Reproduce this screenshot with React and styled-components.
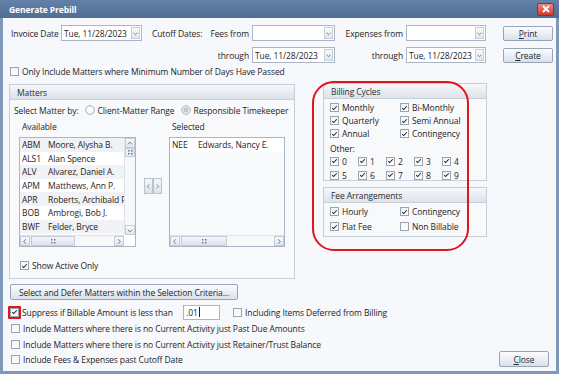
import styled, { createGlobalStyle } from "styled-components";

const GlobalStyle = createGlobalStyle`
  html, body { margin: 0; padding: 0; background: #fff; }
  body {
    font-family: "Open Sans", "Noto Sans", sans-serif;
    font-size: 8.5px;
    letter-spacing: -0.1px;
    color: #1f2328;
  }
  * { box-sizing: border-box; }
`;

const available = [
  ["ABM", "Moore, Alysha B."],
  ["ALS1", "Alan Spence"],
  ["ALV", "Alvarez, Daniel A."],
  ["APM", "Matthews, Ann P."],
  ["APR", "Roberts, Archibald P."],
  ["BOB", "Ambrogi, Bob J."],
  ["BWF", "Felder, Bryce"],
];

const cycles = [
  ["Monthly", "Bi-Monthly"],
  ["Quarterly", "Semi Annual"],
  ["Annual", "Contingency"],
];

function Chevron({ dir = "down" }) {
  const d = {
    down: "M2 3.5 L4.5 6 L7 3.5",
    up: "M2 5.5 L4.5 3 L7 5.5",
    left: "M5.5 2 L3 4.5 L5.5 7",
    right: "M3.5 2 L6 4.5 L3.5 7",
  }[dir];
  return (
    <svg width="9" height="9" viewBox="0 0 9 9">
      <path d={d} fill="none" stroke="#5d6672" strokeWidth="1" />
    </svg>
  );
}

function Grip() {
  return (
    <svg width="5" height="5" viewBox="0 0 5 5">
      {[0, 3].map((x) =>
        [0, 3].map((y) => <rect key={x + "-" + y} x={x} y={y} width="1.5" height="1.5" fill="#6f7884" />)
      )}
    </svg>
  );
}

function Check({ on = true }) {
  return (
    <CheckBox>
      {on && (
        <svg width="8" height="8" viewBox="0 0 8 8">
          <path d="M1.4 4.1 L3.1 5.8 L6.6 2" fill="none" stroke="#23272d" strokeWidth="1.2" />
        </svg>
      )}
    </CheckBox>
  );
}

function Radio({ on }) {
  return (
    <svg width="10" height="10" viewBox="0 0 10 10">
      <circle cx="5" cy="5" r="4.3" fill="#fbfcfd" stroke="#9aa4b1" strokeWidth="0.9" />
      {on && <circle cx="5" cy="5" r="2.4" fill="#c4cad3" stroke="#a6aeb9" strokeWidth="0.6" />}
    </svg>
  );
}

function Combo({ value }) {
  return (
    <ComboBox>
      <ComboText>{value}</ComboText>
      <DropBtn>
        <Chevron />
      </DropBtn>
    </ComboBox>
  );
}

function VScroll() {
  return (
    <VBar>
      <ScrollBtn>
        <Chevron dir="up" />
      </ScrollBtn>
      <VThumb>
        <Grip />
      </VThumb>
      <Track />
      <ScrollBtn>
        <Chevron dir="down" />
      </ScrollBtn>
    </VBar>
  );
}

function HScroll({ thumb }) {
  return (
    <HBar>
      <ScrollBtn>
        <Chevron dir="left" />
      </ScrollBtn>
      <HThumb $w={thumb}>
        <Grip />
      </HThumb>
      <Track />
      <ScrollBtn>
        <Chevron dir="right" />
      </ScrollBtn>
    </HBar>
  );
}

export default function App() {
  return (
    <>
      <GlobalStyle />
      <Window>
        <TitleBar>
          <span>Generate Prebill</span>
          <CloseX>
            <svg width="8" height="8" viewBox="0 0 8 8">
              <path d="M1 1 L7 7 M7 1 L1 7" stroke="#fff" strokeWidth="1.8" />
            </svg>
          </CloseX>
        </TitleBar>
        <Body>
          <TopGrid>
            <Label>Invoice Date</Label>
            <Combo value="Tue, 11/28/2023" />
            <Label $pad>Cutoff Dates:</Label>
            <RLabel>Fees from</RLabel>
            <Combo value="" />
            <RLabel>Expenses from</RLabel>
            <Combo value="" />
            <span />
            <Button>
              <u>P</u>rint
            </Button>

            <span />
            <span />
            <span />
            <RLabel>through</RLabel>
            <Combo value="Tue, 11/28/2023" />
            <RLabel>through</RLabel>
            <Combo value="Tue, 11/28/2023" />
            <span />
            <Button>
              <u>C</u>reate
            </Button>
          </TopGrid>

          <OptionRow $top={1}>
            <Check on={false} />
            Only Include Matters where Minimum Number of Days Have Passed
          </OptionRow>

          <Main>
            <Group $w={286} $h={195}>
              <GroupHead>Matters</GroupHead>
              <SelectRow>
                <span>Select Matter by:</span>
                <RadioItem>
                  <Radio />
                  Client-Matter Range
                </RadioItem>
                <RadioItem>
                  <Radio on />
                  Responsible Timekeeper
                </RadioItem>
              </SelectRow>
              <ListsRow>
                <ListColumn>
                  <ListLabel>Available</ListLabel>
                  <ListBox $w={117}>
                    <Rows>
                      {available.map(([code, name], i) => (
                        <Row key={code} $alt={i % 2 === 0}>
                          <Code>{code}</Code>
                          {name}
                        </Row>
                      ))}
                    </Rows>
                    <VScroll />
                    <HScroll thumb={44} />
                    <Corner />
                  </ListBox>
                </ListColumn>
                <MoveButtons>
                  <MoveBtn>
                    <Chevron dir="left" />
                  </MoveBtn>
                  <MoveBtn>
                    <Chevron dir="right" />
                  </MoveBtn>
                </MoveButtons>
                <ListColumn>
                  <ListLabel>Selected</ListLabel>
                  <ListBox $w={116} $single>
                    <Rows>
                      <Row>
                        <Code>NEE</Code>
                        Edwards, Nancy E.
                      </Row>
                    </Rows>
                    <HScroll thumb={46} />
                  </ListBox>
                </ListColumn>
              </ListsRow>
              <ActiveRow>
                <Check />
                Show Active Only
              </ActiveRow>
            </Group>

            <RightColumn>
              <Group $w={164} $h={98}>
                <GroupHead>Billing Cycles</GroupHead>
                <CycleGrid>
                  {cycles.flat().map((c) => (
                    <Item key={c}>
                      <Check />
                      {c}
                    </Item>
                  ))}
                </CycleGrid>
                <OtherLabel>Other:</OtherLabel>
                <DigitGrid>
                  {[0, 1, 2, 3, 4, 5, 6, 7, 8, 9].map((n) => (
                    <Item key={n}>
                      <Check />
                      {n}
                    </Item>
                  ))}
                </DigitGrid>
              </Group>
              <Group $w={164} $h={50} $top={6}>
                <GroupHead>Fee Arrangements</GroupHead>
                <FeeGrid>
                  <Item>
                    <Check />
                    Hourly
                  </Item>
                  <Item>
                    <Check />
                    Contingency
                  </Item>
                  <Item>
                    <Check />
                    Flat Fee
                  </Item>
                  <Item>
                    <Check on={false} />
                    Non Billable
                  </Item>
                </FeeGrid>
              </Group>
              <HighlightRing />
            </RightColumn>
          </Main>

          <Bottom>
            <Options>
              <Button $w={228} $h={16}>
                Select and Defer Matters within the Selection Criteria...
              </Button>
              <SuppressRow>
                <Marked>
                  <Check />
                </Marked>
                <SuppressLabel>Suppress if Billable Amount is less than</SuppressLabel>
                <AmountInput>
                  .01
                  <Caret />
                </AmountInput>
                <Item>
                  <Check on={false} />
                  Including Items Deferred from Billing
                </Item>
              </SuppressRow>
              <OptionRow $h={16}>
                <Check on={false} />
                Include Matters where there is no Current Activity just Past Due Amounts
              </OptionRow>
              <OptionRow $h={16}>
                <Check on={false} />
                Include Matters where there is no Current Activity just Retainer/Trust Balance
              </OptionRow>
              <OptionRow $h={15}>
                <Check on={false} />
                Include Fees &amp; Expenses past Cutoff Date
              </OptionRow>
            </Options>
            <Button $h={16}>
              <u>C</u>lose
            </Button>
          </Bottom>
        </Body>
      </Window>
    </>
  );
}

const Window = styled.div`
  width: 559px;
  height: 374px;
  display: flex;
  flex-direction: column;
`;

const TitleBar = styled.div`
  height: 18px;
  flex: none;
  display: flex;
  align-items: center;
  justify-content: space-between;
  padding-left: 9px;
  background: linear-gradient(#6482a9, #4f6c93);
  color: #fff;
  font-weight: 700;
  font-size: 8.5px;
`;

const CloseX = styled.div`
  width: 17px;
  height: 13px;
  margin-right: 5px;
  border: 1px solid #8e3329;
  border-radius: 2px;
  background: linear-gradient(#ec8a7c, #cf3a2d);
  display: flex;
  align-items: center;
  justify-content: center;
`;

const Body = styled.div`
  flex: 1;
  display: flex;
  flex-direction: column;
  padding: 7px 6px 0 6px;
  background: #f6f8fb;
  border: 3px solid #7f98ba;
  border-top: none;
`;

const TopGrid = styled.div`
  display: grid;
  grid-template-columns: 50px 81px 62px 48px 83px 71px 80px 17px 50px;
  grid-template-rows: 16px 16px;
  row-gap: 6px;
  margin-left: 2px;
  align-items: center;
`;

const Label = styled.span`
  white-space: nowrap;
  padding-left: ${(p) => (p.$pad ? "10px" : "0")};
`;

const RLabel = styled.span`
  white-space: nowrap;
  justify-self: end;
  padding-right: 3px;
`;

const ComboBox = styled.div`
  height: 16px;
  display: flex;
  align-items: center;
  border: 1px solid #aab6c6;
  background: #fff;
  padding: 1px;
`;

const ComboText = styled.span`
  flex: 1;
  padding-left: 1px;
  white-space: nowrap;
`;

const DropBtn = styled.div`
  width: 9px;
  height: 12px;
  border: 1px solid #c6ceda;
  background: linear-gradient(#f7f8fa, #e3e8ee);
  display: flex;
  align-items: center;
  justify-content: center;
`;

const Button = styled.div`
  width: ${(p) => (p.$w ? `${p.$w}px` : "50px")};
  height: ${(p) => (p.$h ? `${p.$h}px` : "15px")};
  flex: none;
  display: flex;
  align-items: center;
  justify-content: center;
  white-space: nowrap;
  border: 1px solid #97a5b8;
  border-radius: 2px;
  background: linear-gradient(#fbfcfd, #dbe1e9);
  color: #22272d;

  u {
    text-decoration-thickness: 1px;
    text-underline-offset: 1px;
  }
`;

const CheckBox = styled.span`
  width: 9px;
  height: 9px;
  flex: none;
  display: inline-flex;
  align-items: center;
  justify-content: center;
  border: 1px solid #9ba5b2;
  background: linear-gradient(#f2f4f7, #ffffff);
`;

const OptionRow = styled.div`
  height: ${(p) => (p.$h ? `${p.$h}px` : "14px")};
  margin-top: ${(p) => (p.$top ? `${p.$top}px` : "0")};
  display: flex;
  align-items: center;
  gap: 3px;
  white-space: nowrap;
  padding-left: 1px;
`;

const Main = styled.div`
  display: flex;
  align-items: flex-start;
  margin-top: 6px;
`;

const Group = styled.div`
  width: ${(p) => p.$w}px;
  height: ${(p) => p.$h}px;
  flex: none;
  margin-top: ${(p) => (p.$top ? `${p.$top}px` : "0")};
  border: 1px solid #c5cedb;
  background: #f8f9fb;
  display: flex;
  flex-direction: column;
`;

const GroupHead = styled.div`
  height: 15px;
  flex: none;
  display: flex;
  align-items: center;
  padding-left: 7px;
  background: linear-gradient(#f6f7f9, #dce2ea);
  border-bottom: 1px solid #c8d0dc;
  color: #2a2f36;
`;

const SelectRow = styled.div`
  height: 20px;
  display: flex;
  align-items: center;
  padding-left: 4px;
  white-space: nowrap;
  gap: 6px;
`;

const RadioItem = styled.span`
  display: inline-flex;
  align-items: center;
  gap: 3px;
`;

const ListsRow = styled.div`
  display: flex;
  align-items: flex-start;
  padding-left: 9px;
`;

const ListColumn = styled.div`
  display: flex;
  flex-direction: column;
`;

const ListLabel = styled.div`
  height: 17px;
  line-height: 14px;
  padding-left: 3px;
`;

const ListBox = styled.div`
  width: ${(p) => p.$w}px;
  height: 110px;
  border: 1px solid #a9b6c7;
  background: #fff;
  display: grid;
  grid-template-columns: ${(p) => (p.$single ? "1fr" : "1fr 11px")};
  grid-template-rows: 1fr 11px;
  overflow: hidden;
`;

const Rows = styled.div`
  overflow: hidden;
  background: #f9fafb;
`;

const Row = styled.div`
  height: 13.6px;
  display: flex;
  align-items: center;
  padding-left: 2px;
  white-space: nowrap;
  background: ${(p) => (p.$alt ? "#f0f2f5" : "#ffffff")};
`;

const Code = styled.span`
  width: 26px;
  flex: none;
`;

const VBar = styled.div`
  display: flex;
  flex-direction: column;
  background: #eef1f4;
  border-left: 1px solid #dfe4ea;
`;

const HBar = styled.div`
  display: flex;
  background: #eef1f4;
  border-top: 1px solid #dfe4ea;
`;

const ScrollBtn = styled.div`
  width: 10px;
  height: 10px;
  flex: none;
  display: flex;
  align-items: center;
  justify-content: center;
  border: 1px solid #c3ccd8;
  background: linear-gradient(#f8f9fb, #e2e7ee);
`;

const VThumb = styled.div`
  height: 9px;
  flex: none;
  display: flex;
  align-items: center;
  justify-content: center;
  border: 1px solid #c3ccd8;
  background: linear-gradient(90deg, #f3f5f8, #dfe4eb);
`;

const HThumb = styled.div`
  width: ${(p) => p.$w}px;
  flex: none;
  margin-left: 1px;
  display: flex;
  align-items: center;
  justify-content: center;
  border: 1px solid #c3ccd8;
  background: linear-gradient(#f3f5f8, #dfe4eb);
`;

const Track = styled.div`
  flex: 1;
  background: #f7f8fa;
`;

const Corner = styled.div`
  background: #fff;
`;

const MoveButtons = styled.div`
  display: flex;
  margin: 58px 7px 0 8px;
`;

const MoveBtn = styled.div`
  width: 9px;
  height: 16px;
  display: flex;
  align-items: center;
  justify-content: center;
  border: 1px solid #b8c3d1;
  background: linear-gradient(#f7f8fa, #dde3ea);
`;

const ActiveRow = styled.div`
  display: flex;
  align-items: center;
  gap: 3px;
  margin: 13px 0 0 10px;
  white-space: nowrap;
`;

const RightColumn = styled.div`
  position: relative;
  flex: none;
  margin-left: 28px;
  margin-top: -1px;
  display: flex;
  flex-direction: column;
`;

const Item = styled.span`
  display: inline-flex;
  align-items: center;
  gap: 3px;
  white-space: nowrap;
`;

const CycleGrid = styled.div`
  display: grid;
  grid-template-columns: 70px 1fr;
  grid-auto-rows: 13px;
  align-items: center;
  padding: 2px 0 0 6px;
`;

const OtherLabel = styled.div`
  padding: 3px 0 0 6px;
  height: 14px;
  line-height: 12px;
`;

const DigitGrid = styled.div`
  display: grid;
  grid-template-columns: repeat(5, 28px);
  grid-auto-rows: 14px;
  align-items: center;
  padding-left: 6px;
`;

const FeeGrid = styled.div`
  display: grid;
  grid-template-columns: 70px 1fr;
  grid-auto-rows: 15px;
  align-items: center;
  padding: 1px 0 0 6px;
`;

const HighlightRing = styled.div`
  position: absolute;
  left: -11px;
  top: -2px;
  width: 157px;
  height: 170px;
  border: 2px solid #e2141c;
  border-radius: 22px;
  pointer-events: none;
`;

const Bottom = styled.div`
  display: flex;
  align-items: flex-end;
  justify-content: space-between;
  margin-top: 5px;
  padding-right: 1px;
`;

const Options = styled.div`
  display: flex;
  flex-direction: column;
  padding-left: 1px;

  & > ${Button} {
    margin-bottom: 4px;
  }
`;

const SuppressRow = styled.div`
  height: 16px;
  display: flex;
  align-items: center;
  white-space: nowrap;
`;

const Marked = styled.span`
  display: inline-flex;
  margin-left: -2px;
  border: 2px solid #e2141c;
  border-radius: 1px;
`;

const SuppressLabel = styled.span`
  width: 162px;
  padding-left: 1px;
`;

const AmountInput = styled.span`
  width: 37px;
  height: 15px;
  display: inline-flex;
  align-items: center;
  padding-left: 2px;
  margin-right: 13px;
  border: 1px solid #a9b6c7;
  background: #fff;
`;

const Caret = styled.span`
  width: 1px;
  height: 10px;
  background: #222;
  margin-left: 1px;
`;
